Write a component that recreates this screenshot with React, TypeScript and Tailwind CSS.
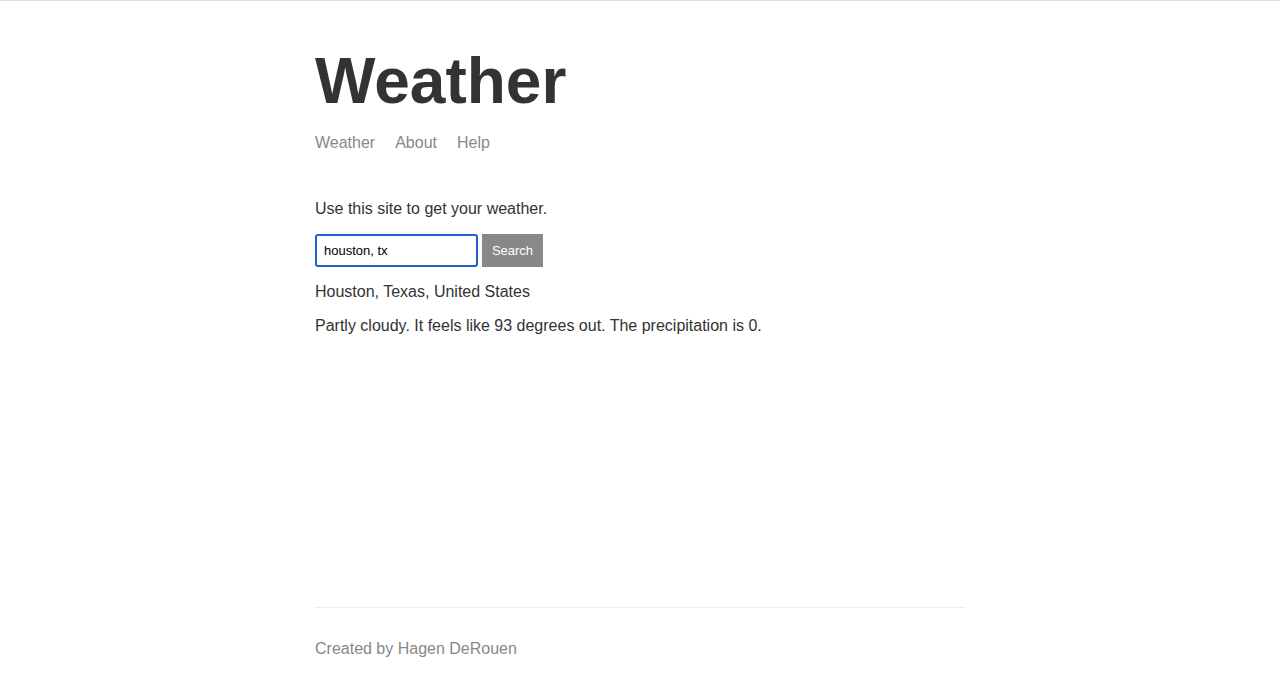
import React from 'react';

const links = ['Weather', 'About', 'Help'];

export default function App() {
  return (
    <div className="min-h-screen border-t border-[#dcdcdc] bg-white font-['Liberation_Sans',Arial,sans-serif] text-[16px] leading-[18px] text-[#333]">
      <div className="mx-auto flex min-h-[689px] w-[650px] flex-col">
        <header className="pt-[48px]">
          <h1 className="text-[64px] font-bold leading-[64px] text-[#333]">Weather</h1>
          <nav className="mt-[21px] flex">
            {links.map((l) => (
              <a key={l} href="#" className="mr-[20px] text-[#888]">
                {l}
              </a>
            ))}
          </nav>
        </header>

        <main className="mt-[48px] flex-grow">
          <p>Use this site to get your weather.</p>
          <form className="mt-[16px] flex gap-[4px]" onSubmit={(e) => e.preventDefault()}>
            <input
              defaultValue="houston, tx"
              className="h-[33px] w-[163px] rounded-[3px] border-2 border-[#1f5fcf] px-[7px] text-[13px] text-black outline-none"
            />
            <button className="h-[33px] w-[61px] bg-[#888] text-[13px] text-white">Search</button>
          </form>
          <p className="mt-[16px]">Houston, Texas, United States</p>
          <p className="mt-[16px]">Partly cloudy. It feels like 93 degrees out. The precipitation is 0.</p>
        </main>

        <footer className="border-t border-[#eee] pt-[32px] pb-[32px] text-[#888]">
          Created by Hagen DeRouen
        </footer>
      </div>
    </div>
  );
}
